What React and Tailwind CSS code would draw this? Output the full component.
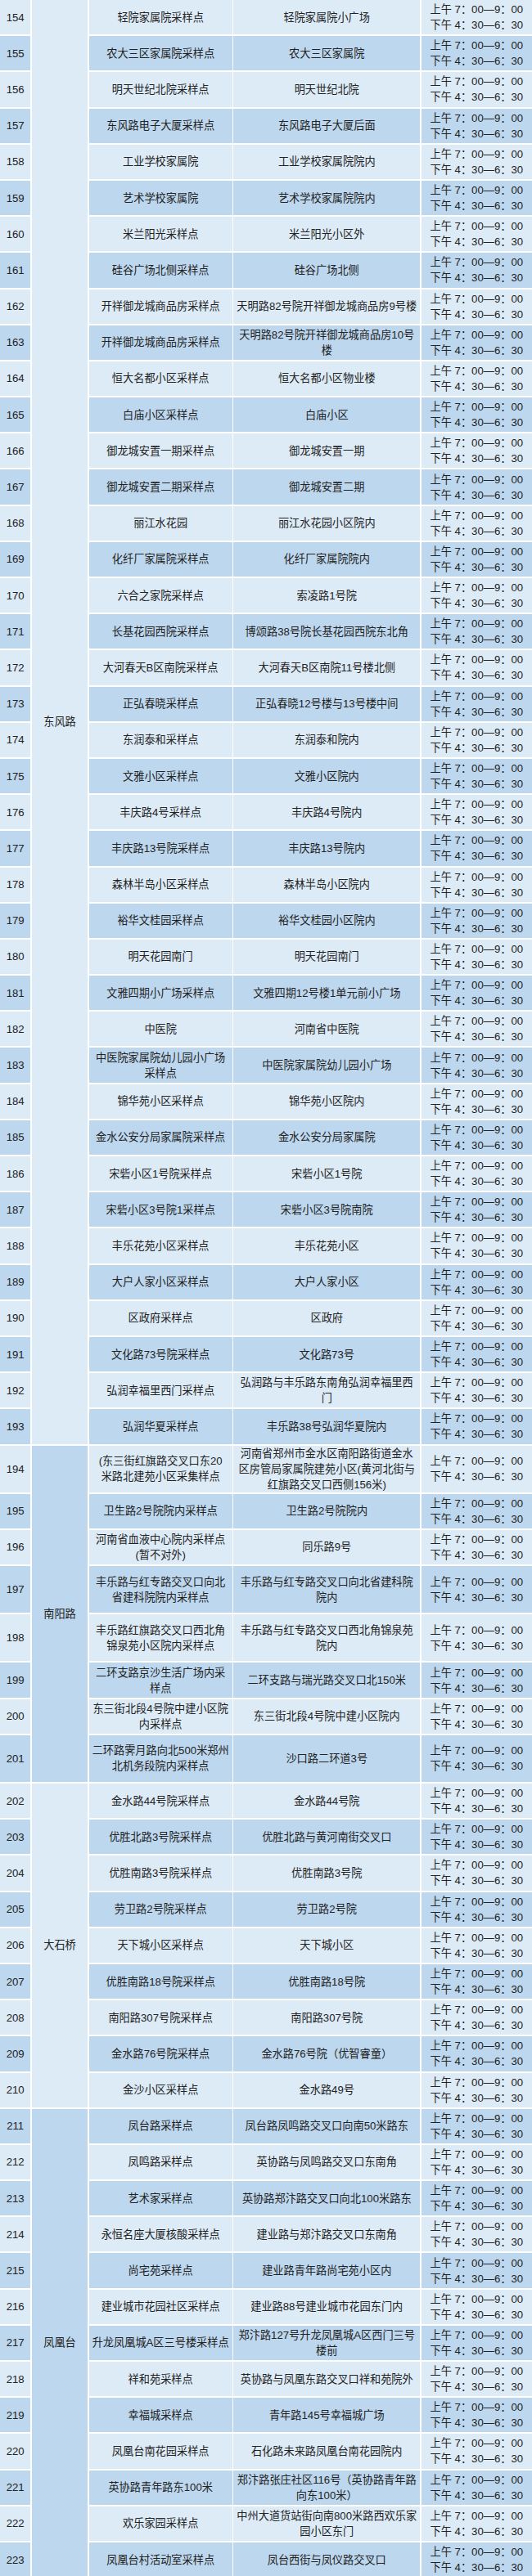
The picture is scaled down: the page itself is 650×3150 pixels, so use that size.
const rows = [
  [154, ["轻院家属院采样点"], ["轻院家属院小广场"]],
  [155, ["农大三区家属院采样点"], ["农大三区家属院"]],
  [156, ["明天世纪北院采样点"], ["明天世纪北院"]],
  [157, ["东风路电子大厦采样点"], ["东风路电子大厦后面"]],
  [158, ["工业学校家属院"], ["工业学校家属院院内"]],
  [159, ["艺术学校家属院"], ["艺术学校家属院院内"]],
  [160, ["米兰阳光采样点"], ["米兰阳光小区外"]],
  [161, ["硅谷广场北侧采样点"], ["硅谷广场北侧"]],
  [162, ["开祥御龙城商品房采样点"], ["天明路82号院开祥御龙城商品房9号楼"]],
  [163, ["开祥御龙城商品房采样点"], ["天明路82号院开祥御龙城商品房10号", "楼"]],
  [164, ["恒大名都小区采样点"], ["恒大名都小区物业楼"]],
  [165, ["白庙小区采样点"], ["白庙小区"]],
  [166, ["御龙城安置一期采样点"], ["御龙城安置一期"]],
  [167, ["御龙城安置二期采样点"], ["御龙城安置二期"]],
  [168, ["丽江水花园"], ["丽江水花园小区院内"]],
  [169, ["化纤厂家属院采样点"], ["化纤厂家属院院内"]],
  [170, ["六合之家院采样点"], ["索凌路1号院"]],
  [171, ["长基花园西院采样点"], ["博颂路38号院长基花园西院东北角"]],
  [172, ["大河春天B区南院采样点"], ["大河春天B区南院11号楼北侧"]],
  [173, ["正弘春晓采样点"], ["正弘春晓12号楼与13号楼中间"]],
  [174, ["东润泰和采样点"], ["东润泰和院内"]],
  [175, ["文雅小区采样点"], ["文雅小区院内"]],
  [176, ["丰庆路4号采样点"], ["丰庆路4号院内"]],
  [177, ["丰庆路13号院采样点"], ["丰庆路13号院内"]],
  [178, ["森林半岛小区采样点"], ["森林半岛小区院内"]],
  [179, ["裕华文桂园采样点"], ["裕华文桂园小区院内"]],
  [180, ["明天花园南门"], ["明天花园南门"]],
  [181, ["文雅四期小广场采样点"], ["文雅四期12号楼1单元前小广场"]],
  [182, ["中医院"], ["河南省中医院"]],
  [183, ["中医院家属院幼儿园小广场", "采样点"], ["中医院家属院幼儿园小广场"]],
  [184, ["锦华苑小区采样点"], ["锦华苑小区院内"]],
  [185, ["金水公安分局家属院采样点"], ["金水公安分局家属院"]],
  [186, ["宋砦小区1号院采样点"], ["宋砦小区1号院"]],
  [187, ["宋砦小区3号院1采样点"], ["宋砦小区3号院南院"]],
  [188, ["丰乐花苑小区采样点"], ["丰乐花苑小区"]],
  [189, ["大户人家小区采样点"], ["大户人家小区"]],
  [190, ["区政府采样点"], ["区政府"]],
  [191, ["文化路73号院采样点"], ["文化路73号"]],
  [192, ["弘润幸福里西门采样点"], ["弘润路与丰乐路东南角弘润幸福里西", "门"]],
  [193, ["弘润华夏采样点"], ["丰乐路38号弘润华夏院内"]],
  [194, ["(东三街红旗路交叉口东20", "米路北建苑小区采集样点"], ["河南省郑州市金水区南阳路街道金水", "区房管局家属院建苑小区(黄河北街与", "红旗路交叉口西侧156米)"], true],
  [195, ["卫生路2号院院内采样点"], ["卫生路2号院院内"]],
  [196, ["河南省血液中心院内采样点", "(暂不对外)"], ["同乐路9号"]],
  [197, ["丰乐路与红专路交叉口向北", "省建科院院内采样点"], ["丰乐路与红专路交叉口向北省建科院", "院内"], true],
  [198, ["丰乐路红旗路交叉口西北角", "锦泉苑小区院内采样点"], ["丰乐路与红专路交叉口西北角锦泉苑", "院内"], true],
  [199, ["二环支路京沙生活广场内采", "样点"], ["二环支路与瑞光路交叉口北150米"]],
  [200, ["东三街北段4号院中建小区院", "内采样点"], ["东三街北段4号院中建小区院内"]],
  [201, ["二环路霁月路向北500米郑州", "北机务段院内采样点"], ["沙口路二环道3号"], true],
  [202, ["金水路44号院采样点"], ["金水路44号院"]],
  [203, ["优胜北路3号院采样点"], ["优胜北路与黄河南街交叉口"]],
  [204, ["优胜南路3号院采样点"], ["优胜南路3号院"]],
  [205, ["劳卫路2号院采样点"], ["劳卫路2号院"]],
  [206, ["天下城小区采样点"], ["天下城小区"]],
  [207, ["优胜南路18号院采样点"], ["优胜南路18号院"]],
  [208, ["南阳路307号院采样点"], ["南阳路307号院"]],
  [209, ["金水路76号院采样点"], ["金水路76号院（优智睿童）"]],
  [210, ["金沙小区采样点"], ["金水路49号"]],
  [211, ["凤台路采样点"], ["凤台路凤鸣路交叉口向南50米路东"]],
  [212, ["凤鸣路采样点"], ["英协路与凤鸣路交叉口东南角"]],
  [213, ["艺术家采样点"], ["英协路郑汴路交叉口向北100米路东"]],
  [214, ["永恒名座大厦核酸采样点"], ["建业路与郑汴路交叉口东南角"]],
  [215, ["尚宅苑采样点"], ["建业路青年路尚宅苑小区内"]],
  [216, ["建业城市花园社区采样点"], ["建业路88号建业城市花园东门内"]],
  [217, ["升龙凤凰城A区三号楼采样点"], ["郑汴路127号升龙凤凰城A区西门三号", "楼前"]],
  [218, ["祥和苑采样点"], ["英协路与凤凰东路交叉口祥和苑院外"]],
  [219, ["幸福城采样点"], ["青年路145号幸福城广场"]],
  [220, ["凤凰台南花园采样点"], ["石化路未来路凤凰台南花园院内"]],
  [221, ["英协路青年路东100米"], ["郑汴路张庄社区116号（英协路青年路", "向东100米）"]],
  [222, ["欢乐家园采样点"], ["中州大道货站街向南800米路西欢乐家", "园小区东门"]],
  [223, ["凤凰台村活动室采样点"], ["凤台西街与凤仪路交叉口"]],
];

const districts = {
  154: { name: "东风路", cls: "col-start-2 row-span-[40] bg-[#ddebf7]" },
  194: { name: "南阳路", cls: "col-start-2 row-span-[8] bg-[#bdd7ee]" },
  202: { name: "大石桥", cls: "col-start-2 row-span-[9] bg-[#ddebf7]" },
  211: { name: "凤凰台", cls: "col-start-2 row-span-[13] bg-[#bdd7ee]" },
};

function Lines({ lines }) {
  return (
    <div>
      {lines.map((l, i) => (
        <div key={i} className="whitespace-nowrap">
          {l}
        </div>
      ))}
    </div>
  );
}

export default function App() {
  return (
    <div className="w-[650px] bg-white font-['Liberation_Sans','Noto_Sans_CJK_SC',sans-serif] text-[13.2px] leading-[19px] text-[#222]">
      <div className="grid grid-cols-[37.3px_68px_175px_227.8px_135px] gap-x-[1.7px] gap-y-[2px]">
        {rows.map(([n, name, addr, tall], idx) => {
          const bg = idx % 2 === 0 ? "bg-[#ddebf7]" : "bg-[#bdd7ee]";
          const h = tall ? "h-[57.2px]" : "h-[42.2px]";
          const d = districts[n];
          return [
            <div key={n + "n"} className={`col-start-1 ${h} ${bg} flex items-center justify-center`}>
              {n}
            </div>,
            d ? (
              <div key={n + "d"} className={`${d.cls} flex items-center justify-center`}>
                {d.name}
              </div>
            ) : null,
            <div key={n + "a"} className={`col-start-3 ${h} ${bg} flex items-center justify-center text-center px-[2.5px]`}>
              <Lines lines={name} />
            </div>,
            <div key={n + "b"} className={`col-start-4 ${h} ${bg} flex items-center justify-center text-center px-[2.5px]`}>
              <Lines lines={addr} />
            </div>,
            <div key={n + "t"} className={`col-start-5 ${h} ${bg} flex items-center justify-center text-center`}>
              <Lines lines={["上午 7：00—9：00", "下午 4：30—6：30"]} />
            </div>,
          ];
        })}
      </div>
    </div>
  );
}
